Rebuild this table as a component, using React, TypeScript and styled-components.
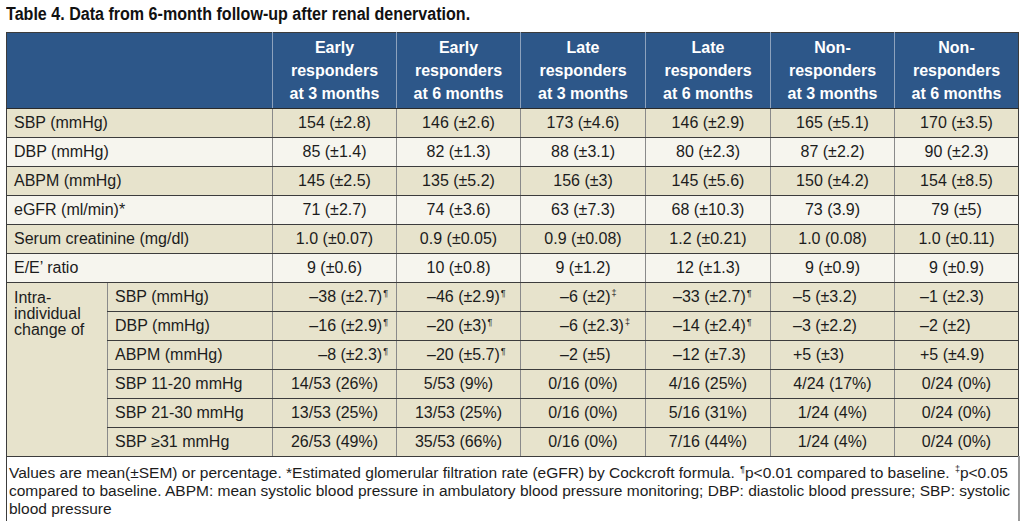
import styled, { createGlobalStyle } from "styled-components";

const GlobalStyle = createGlobalStyle`
  html, body {
    margin: 0;
    padding: 0;
    background: #ffffff;
  }
`;

const Page = styled.div`
  width: 1025px;
  padding: 2px 6px 0 6px;
  box-sizing: border-box;
  font-family: "Liberation Sans", Arial, sans-serif;
  color: #1c1c1c;
`;

const Title = styled.h1`
  margin: 0 0 6px 0;
  font-family: "Liberation Sans", Arial, sans-serif;
  font-weight: bold;
  font-size: 18px;
  line-height: 24px;
  color: #111;
  white-space: nowrap;
  transform: scaleX(0.893);
  transform-origin: left center;
`;

const Table = styled.table`
  width: 1012px;
  border-collapse: collapse;
  table-layout: fixed;
  font-size: 16px;
  border: 1px solid #3c3c3c;
`;

const Col = styled.col<{ $w: number }>`
  width: ${(p) => p.$w}px;
`;

const HeadRow = styled.tr`
  background: #2d5789;
`;

const HeadCell = styled.th`
  color: #ffffff;
  font-size: 16px;
  font-weight: bold;
  line-height: 23px;
  padding: 3px 4px 3px 4px;
  text-align: center;
  vertical-align: middle;
  border-left: 1px solid #8da2bd;
  border-bottom: 1px solid #2a2a2a;

  &:first-child {
    border-left: none;
  }
`;

const Row = styled.tr<{ $shade: boolean }>`
  background: ${(p) => (p.$shade ? "#e7e3cc" : "#f6f5ee")};
`;

const LabelCell = styled.td<{ $edge?: boolean }>`
  height: 28px;
  padding: 0 7px;
  text-align: left;
  white-space: nowrap;
  border-bottom: 1px solid #3c3c3c;
  border-left: ${(p) => (p.$edge ? "none" : "1px solid #8a8a8a")};
`;

const GroupCell = styled.td`
  padding: 7px 7px 0 7px;
  line-height: 16px;
  vertical-align: top;
  background: #e7e3cc;
  border-bottom: 1px solid #3c3c3c;
`;

const ValueCell = styled.td<{ $align?: "left" | "center" | "right"; $pad?: number }>`
  height: 28px;
  padding: 0 ${(p) => (p.$align === "right" ? p.$pad ?? 0 : 0)}px 0
    ${(p) => (p.$align === "left" ? p.$pad ?? 0 : 0)}px;
  text-align: ${(p) => p.$align ?? "center"};
  white-space: nowrap;
  border-bottom: 1px solid #3c3c3c;
  border-left: 1px solid #8a8a8a;
`;

const Mark = styled.sup`
  font-size: 9px;
  line-height: 0;
  vertical-align: 6px;
  margin-left: 1px;
`;

const NoteCell = styled.td`
  background: #ffffff;
  padding: 7px 4px 8px 2px;
  font-size: 15.5px;
  line-height: 18px;
  border-top: 1px solid #3c3c3c;
  border-right: 2px solid #9a9a9a;
  border-bottom: 2px solid #9a9a9a;
`;

const colWidths = [101, 165, 124, 124, 125, 125, 124, 124];

const heads = [
  ["Early", "responders", "at 3 months"],
  ["Early", "responders", "at 6 months"],
  ["Late", "responders", "at 3 months"],
  ["Late", "responders", "at 6 months"],
  ["Non-", "responders", "at 3 months"],
  ["Non-", "responders", "at 6 months"],
];

const mainRows: { label: string; values: string[] }[] = [
  { label: "SBP (mmHg)", values: ["154 (±2.8)", "146 (±2.6)", "173 (±4.6)", "146 (±2.9)", "165 (±5.1)", "170 (±3.5)"] },
  { label: "DBP (mmHg)", values: ["85 (±1.4)", "82 (±1.3)", "88 (±3.1)", "80 (±2.3)", "87 (±2.2)", "90 (±2.3)"] },
  { label: "ABPM (mmHg)", values: ["145 (±2.5)", "135 (±5.2)", "156 (±3)", "145 (±5.6)", "150 (±4.2)", "154 (±8.5)"] },
  { label: "eGFR (ml/min)*", values: ["71 (±2.7)", "74 (±3.6)", "63 (±7.3)", "68 (±10.3)", "73 (3.9)", "79 (±5)"] },
  { label: "Serum creatinine (mg/dl)", values: ["1.0 (±0.07)", "0.9 (±0.05)", "0.9 (±0.08)", "1.2 (±0.21)", "1.0 (0.08)", "1.0 (±0.11)"] },
  { label: "E/E’ ratio", values: ["9 (±0.6)", "10 (±0.8)", "9 (±1.2)", "12 (±1.3)", "9 (±0.9)", "9 (±0.9)"] },
];

// value, footnote mark
type Val = [string, string?];

const changeRows: { label: string; values: Val[]; spread?: boolean }[] = [
  { label: "SBP (mmHg)", spread: true, values: [["–38 (±2.7)", "¶"], ["–46 (±2.9)", "¶"], ["–6 (±2)", "‡"], ["–33 (±2.7)", "¶"], ["–5 (±3.2)"], ["–1 (±2.3)"]] },
  { label: "DBP (mmHg)", spread: true, values: [["–16 (±2.9)", "¶"], ["–20 (±3)", "¶"], ["–6 (±2.3)", "‡"], ["–14 (±2.4)", "¶"], ["–3 (±2.2)"], ["–2 (±2)"]] },
  { label: "ABPM (mmHg)", spread: true, values: [["–8 (±2.3)", "¶"], ["–20 (±5.7)", "¶"], ["–2 (±5)"], ["–12 (±7.3)"], ["+5 (±3)"], ["+5 (±4.9)"]] },
  { label: "SBP 11-20 mmHg", values: [["14/53 (26%)"], ["5/53 (9%)"], ["0/16 (0%)"], ["4/16 (25%)"], ["4/24 (17%)"], ["0/24 (0%)"]] },
  { label: "SBP 21-30 mmHg", values: [["13/53 (25%)"], ["13/53 (25%)"], ["0/16 (0%)"], ["5/16 (31%)"], ["1/24 (4%)"], ["0/24 (0%)"]] },
  { label: "SBP ≥31 mmHg", values: [["26/53 (49%)"], ["35/53 (66%)"], ["0/16 (0%)"], ["7/16 (44%)"], ["1/24 (4%)"], ["0/24 (0%)"]] },
];

const spreadAlign: { align: "left" | "right"; pad: number }[] = [
  { align: "right", pad: 8 },
  { align: "left", pad: 30 },
  { align: "left", pad: 39 },
  { align: "left", pad: 27 },
  { align: "left", pad: 22 },
  { align: "left", pad: 25 },
];

const App = () => {
  return (
    <Page>
      <GlobalStyle />
      <Title>Table 4. Data from 6-month follow-up after renal denervation.</Title>
      <Table>
        <colgroup>
          {colWidths.map((w, i) => (
            <Col key={i} $w={w} />
          ))}
        </colgroup>
        <thead>
          <HeadRow>
            <HeadCell colSpan={2} />
            {heads.map((h, i) => (
              <HeadCell key={i}>
                {h[0]}
                <br />
                {h[1]}
                <br />
                {h[2]}
              </HeadCell>
            ))}
          </HeadRow>
        </thead>
        <tbody>
          {mainRows.map((r, i) => (
            <Row key={r.label} $shade={i % 2 === 0}>
              <LabelCell colSpan={2} $edge>
                {r.label}
              </LabelCell>
              {r.values.map((v, j) => (
                <ValueCell key={j}>{v}</ValueCell>
              ))}
            </Row>
          ))}
          {changeRows.map((r, i) => (
            <Row key={"c" + i} $shade>
              {i === 0 && (
                <GroupCell rowSpan={changeRows.length}>
                  Intra-
                  <br />
                  individual
                  <br />
                  change of
                </GroupCell>
              )}
              <LabelCell>{r.label}</LabelCell>
              {r.values.map(([v, mark], j) => (
                <ValueCell
                  key={j}
                  $align={r.spread ? spreadAlign[j].align : "center"}
                  $pad={r.spread ? spreadAlign[j].pad : 0}
                >
                  {v}
                  {mark && <Mark>{mark}</Mark>}
                </ValueCell>
              ))}
            </Row>
          ))}
          <tr>
            <NoteCell colSpan={8}>
              Values are mean(±SEM) or percentage. *Estimated glomerular filtration rate (eGFR) by Cockcroft
              formula. <Mark>¶</Mark>p&lt;0.01 compared to baseline. <Mark>‡</Mark>p&lt;0.05 compared to
              baseline. ABPM: mean systolic blood pressure in ambulatory blood pressure monitoring; DBP:
              diastolic blood pressure; SBP: systolic blood pressure
            </NoteCell>
          </tr>
        </tbody>
      </Table>
    </Page>
  );
};

export default App;
